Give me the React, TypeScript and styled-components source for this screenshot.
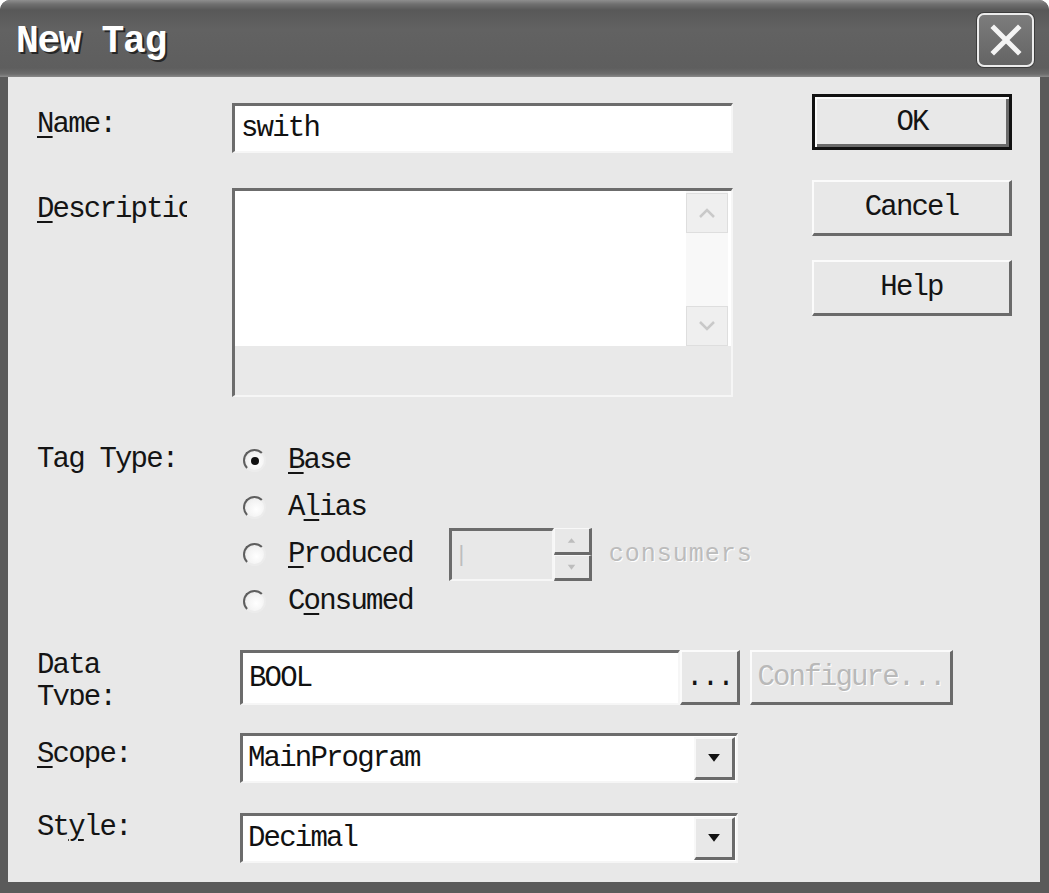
import React from 'react';
import styled, { createGlobalStyle, css } from 'styled-components';

const Global = createGlobalStyle`
  html, body { margin: 0; padding: 0; background: #ffffff; }
  body { font-family: "Liberation Mono", "DejaVu Sans Mono", monospace; }
  * { box-sizing: border-box; }
`;

const FONT = `"Liberation Mono", "DejaVu Sans Mono", monospace`;

const textFace = css`
  font-family: ${FONT};
  font-size: 29px;
  letter-spacing: -1.8px;
`;

const Window = styled.div`
  width: 1049px;
  height: 893px;
  display: flex;
  flex-direction: column;
  overflow: hidden;
  background: #5a5a5a;
  border-radius: 10px 10px 0 0;
`;

const TitleBar = styled.div`
  height: 77px;
  flex: none;
  display: flex;
  align-items: center;
  justify-content: space-between;
  padding: 5px 15px 0 16px;
  background: linear-gradient(
    #8e8e8e 0px,
    #707070 4px,
    #585858 10px,
    #626262 30px,
    #5e5e5e 68px,
    #6c6c6c 74px,
    #8a8a8a 77px
  );
`;

const Title = styled.div`
  font-family: ${FONT};
  font-weight: bold;
  font-size: 38px;
  color: #ffffff;
  letter-spacing: -1.4px;
  text-shadow: 2px 2px 0 #262626;
`;

const CloseBtn = styled.div`
  width: 57px;
  height: 54px;
  margin-top: -2px;
  border: 2px solid #ececec;
  border-radius: 7px;
  background: linear-gradient(#7c7c7c, #646464);
  display: flex;
  align-items: center;
  justify-content: center;
  box-shadow: 0 0 0 1px #3c3c3c;
`;

const Body = styled.div`
  flex: 1;
  margin: 0 9px 11px 8px;
  background: #e8e8e8;
  display: flex;
  flex-direction: column;
  padding-left: 29px;
`;

const TopSection = styled.div`
  display: flex;
  justify-content: space-between;
  padding-right: 28px;
`;

const FieldColumn = styled.div`
  display: flex;
  flex-direction: column;
  padding-top: 26px;
`;

const ButtonColumn = styled.div`
  display: flex;
  flex-direction: column;
  padding-top: 17px;
`;

const Row = styled.div<{ $top: number; $h: number }>`
  display: flex;
  align-items: flex-start;
  margin-top: ${p => p.$top}px;
  height: ${p => p.$h}px;
  flex: none;
`;

const LabelCell = styled.div`
  width: 195px;
  flex: none;
`;

const Label = styled.div<{ $lh?: number; $clip?: number; $h?: number }>`
  ${textFace};
  color: #141414;
  line-height: ${p => p.$lh ?? 44}px;
  white-space: nowrap;
  ${p => p.$clip && css`width: ${p.$clip}px; overflow: hidden;`}
  ${p => p.$h && css`height: ${p.$h}px; overflow: hidden;`}
`;

const U = styled.span`
  text-decoration: underline;
  text-underline-offset: 4px;
  text-decoration-thickness: 2px;
`;

const sunken = css`
  border-style: solid;
  border-width: 3px 2px 2px 3px;
  border-color: #6c6c6c #f6f6f6 #f6f6f6 #6c6c6c;
`;

const TextBox = styled.div<{ $w: number; $h: number; $ml?: number }>`
  ${sunken};
  ${textFace};
  width: ${p => p.$w}px;
  height: ${p => p.$h}px;
  margin-left: ${p => p.$ml ?? 0}px;
  background: #ffffff;
  display: flex;
  align-items: center;
  padding-left: 6px;
  color: #111111;
  flex: none;
`;

const MemoBox = styled.div`
  ${sunken};
  width: 501px;
  height: 209px;
  display: flex;
  flex-direction: column;
  background: #e9e9e9;
`;

const MemoTop = styled.div`
  display: flex;
  height: 155px;
  background: #ffffff;
`;

const MemoText = styled.div`
  flex: 1;
`;

const VScroll = styled.div`
  width: 42px;
  margin-right: 3px;
  display: flex;
  flex-direction: column;
  background: #f7f7f7;
  padding-top: 2px;
`;

const ScrollBtn = styled.div`
  height: 40px;
  border: 1px solid #dedede;
  background: #efefef;
  display: flex;
  align-items: center;
  justify-content: center;
`;

const ScrollTrack = styled.div`
  flex: 1;
  background: #f8f8f8;
`;

const raised = css`
  border-style: solid;
  border-width: 2px 3px 3px 2px;
  border-color: #fbfbfb #6a6a6a #6a6a6a #fbfbfb;
`;

const Button = styled.div<{ $default?: boolean; $mt?: number; $ml?: number; $w?: number; $h?: number; $disabled?: boolean }>`
  ${raised};
  ${textFace};
  width: ${p => p.$w ?? 200}px;
  height: ${p => p.$h ?? 56}px;
  margin-top: ${p => p.$mt ?? 0}px;
  margin-left: ${p => p.$ml ?? 0}px;
  background: #e8e8e8;
  display: flex;
  align-items: center;
  justify-content: center;
  color: ${p => (p.$disabled ? '#b9b9b9' : '#141414')};
  white-space: nowrap;
  ${p => p.$disabled && css`text-shadow: 1px 1px 0 #ffffff;`}
  flex: none;
  ${p =>
    p.$default &&
    css`
      border: 3px solid #111111;
      box-shadow: inset 2px 2px 0 #fbfbfb, inset -3px -3px 0 #6a6a6a;
    `}
`;

const RadioGroup = styled.div`
  display: flex;
  flex-direction: column;
  padding-left: 11px;
`;

const RadioRow = styled.div`
  height: 47px;
  display: flex;
  align-items: center;
`;

const RadioCircle = styled.div<{ $checked?: boolean }>`
  width: 23px;
  height: 23px;
  border-radius: 50%;
  border: 2px solid;
  border-color: #5e5e5e #ececec #ececec #5e5e5e;
  background: radial-gradient(circle at 60% 60%, #ffffff 0%, #f2f2f2 60%, #dadada 100%);
  display: flex;
  align-items: center;
  justify-content: center;
  flex: none;
  &::after {
    content: '';
    width: 8px;
    height: 8px;
    border-radius: 50%;
    background: ${p => (p.$checked ? '#111111' : 'transparent')};
  }
`;

const RadioText = styled.div`
  ${textFace};
  color: #141414;
  margin-left: 22px;
  white-space: nowrap;
`;

const Spin = styled.div`
  display: flex;
  align-items: stretch;
  height: 53px;
  margin-left: 36px;
`;

const SpinEdit = styled.div`
  ${sunken};
  width: 105px;
  background: #e8e8e8;
  font-family: ${FONT};
  font-size: 22px;
  color: #bdbdbd;
  display: flex;
  align-items: center;
  padding-left: 3px;
`;

const SpinButtons = styled.div`
  width: 38px;
  display: flex;
  flex-direction: column;
`;

const SpinBtn = styled.div`
  flex: 1;
  border-style: solid;
  border-width: 1px 3px 3px 1px;
  border-color: #f8f8f8 #6a6a6a #6a6a6a #f8f8f8;
  background: #e8e8e8;
  display: flex;
  align-items: center;
  justify-content: center;
`;

const DisabledText = styled.div`
  font-family: ${FONT};
  font-size: 25px;
  color: #bcbcbc;
  text-shadow: 1px 1px 0 #ffffff;
  margin-left: 17px;
  align-self: center;
  letter-spacing: 1px;
`;

const Combo = styled.div`
  ${sunken};
  ${textFace};
  width: 498px;
  height: 50px;
  margin-left: 8px;
  background: #ffffff;
  display: flex;
  align-items: stretch;
  color: #111111;
`;

const ComboText = styled.div`
  flex: 1;
  display: flex;
  align-items: center;
  padding-left: 5px;
`;

const DropBtn = styled.div`
  width: 41px;
  margin: 1px 1px 1px 0;
  border-style: solid;
  border-width: 2px 3px 3px 2px;
  border-color: #f8f8f8 #6a6a6a #6a6a6a #f8f8f8;
  background: #e8e8e8;
  display: flex;
  align-items: center;
  justify-content: center;
`;

const Chevron: React.FC<{ up?: boolean }> = ({ up }) => (
  <svg width="20" height="12" viewBox="0 0 20 12">
    <path
      d={up ? 'M3 10 L10 3 L17 10' : 'M3 2 L10 9 L17 2'}
      fill="none"
      stroke="#c9c9c9"
      strokeWidth="2.5"
    />
  </svg>
);

const Tri: React.FC<{ up?: boolean; color?: string; size?: number }> = ({ up, color = '#111', size = 14 }) => (
  <svg width={size} height={size * 0.7} viewBox="0 0 14 10">
    <path d={up ? 'M1 9 L7 2 L13 9 Z' : 'M1 1 L13 1 L7 9 Z'} fill={color} />
  </svg>
);

export default function App() {
  return (
    <>
      <Global />
      <Window>
        <TitleBar>
          <Title>New Tag</Title>
          <CloseBtn>
            <svg width="34" height="34" viewBox="0 0 34 34">
              <path d="M5 5 L29 29 M29 5 L5 29" stroke="#f4f4f4" strokeWidth="5" strokeLinecap="square" />
            </svg>
          </CloseBtn>
        </TitleBar>
        <Body>
          <TopSection>
            <FieldColumn>
              <Row $top={0} $h={50}>
                <LabelCell>
                  <Label>
                    <U>N</U>ame:
                  </Label>
                </LabelCell>
                <TextBox $w={501} $h={50}>swith</TextBox>
              </Row>
              <Row $top={35} $h={209}>
                <LabelCell>
                  <Label $clip={150}>
                    <U>D</U>escription:
                  </Label>
                </LabelCell>
                <MemoBox>
                  <MemoTop>
                    <MemoText />
                    <VScroll>
                      <ScrollBtn>
                        <Chevron up />
                      </ScrollBtn>
                      <ScrollTrack />
                      <ScrollBtn>
                        <Chevron />
                      </ScrollBtn>
                    </VScroll>
                  </MemoTop>
                </MemoBox>
              </Row>
            </FieldColumn>
            <ButtonColumn>
              <Button $default>OK</Button>
              <Button $mt={30}>Cancel</Button>
              <Button $mt={24}>Help</Button>
            </ButtonColumn>
          </TopSection>

          <Row $top={40} $h={188}>
            <LabelCell>
              <Label $lh={46}>Tag Type:</Label>
            </LabelCell>
            <RadioGroup>
              <RadioRow>
                <RadioCircle $checked />
                <RadioText>
                  <U>B</U>ase
                </RadioText>
              </RadioRow>
              <RadioRow>
                <RadioCircle />
                <RadioText>
                  A<U>l</U>ias
                </RadioText>
              </RadioRow>
              <RadioRow>
                <RadioCircle />
                <RadioText>
                  <U>P</U>roduced
                </RadioText>
                <Spin>
                  <SpinEdit>|</SpinEdit>
                  <SpinButtons>
                    <SpinBtn>
                      <Tri up color="#bdbdbd" size={9} />
                    </SpinBtn>
                    <SpinBtn>
                      <Tri color="#bdbdbd" size={9} />
                    </SpinBtn>
                  </SpinButtons>
                </Spin>
                <DisabledText>consumers</DisabledText>
              </RadioRow>
              <RadioRow>
                <RadioCircle />
                <RadioText>
                  C<U>o</U>nsumed
                </RadioText>
              </RadioRow>
            </RadioGroup>
          </Row>

          <Row $top={25} $h={55}>
            <LabelCell>
              <Label $lh={32} $h={55}>
                Data
                <br />
                Type:
              </Label>
            </LabelCell>
            <TextBox $w={440} $h={55} $ml={8}>
              BOOL
            </TextBox>
            <Button $w={60} $h={55}>
              ...
            </Button>
            <Button $w={203} $h={55} $ml={10} $disabled>
              Configure...
            </Button>
          </Row>

          <Row $top={28} $h={50}>
            <LabelCell>
              <Label>
                <U>S</U>cope:
              </Label>
            </LabelCell>
            <Combo>
              <ComboText>MainProgram</ComboText>
              <DropBtn>
                <Tri />
              </DropBtn>
            </Combo>
          </Row>

          <Row $top={30} $h={50}>
            <LabelCell>
              <Label $lh={30}>
                St<U>y</U>le:
              </Label>
            </LabelCell>
            <Combo>
              <ComboText>Decimal</ComboText>
              <DropBtn>
                <Tri />
              </DropBtn>
            </Combo>
          </Row>
        </Body>
      </Window>
    </>
  );
}
